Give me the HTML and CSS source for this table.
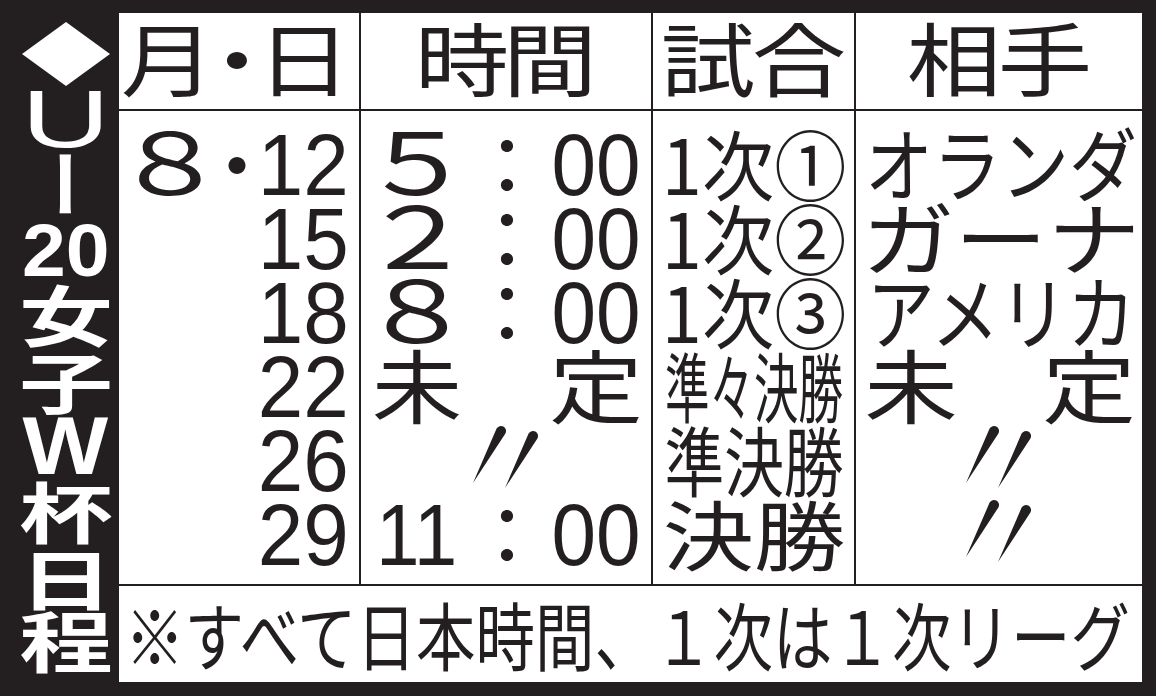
FILE: index.html
```html
<!DOCTYPE html>
<html lang="ja">
<head>
<meta charset="utf-8">
<title>U-20女子W杯日程</title>
<link rel="stylesheet" href="styles.css">
</head>
<body>
<div class="page">
  <div class="side">
    <div class="slot s-dia"><svg width="88" height="64" viewBox="0 0 88 64"><polygon points="44,0 88,32 44,64 0,32" fill="#fff"/></svg></div>
    <div class="slot s-u"><span class="lat">U</span></div>
    <div class="slot s-dash"><span class="dash">ー</span></div>
    <div class="slot s-20"><span class="latb n20">20</span></div>
    <div class="slot s-k1"><span class="kj">女</span></div>
    <div class="slot s-k2"><span class="kj">子</span></div>
    <div class="slot s-w"><span class="latb wl">W</span></div>
    <div class="slot s-k3"><span class="kj">杯</span></div>
    <div class="slot s-k4"><span class="kj">日</span></div>
    <div class="slot s-k5"><span class="kj">程</span></div>
  </div>
  <div class="main">
    <div class="table">
      <div class="cell hd h1"><span class="hc hw64"><span>月</span></span><span class="hc hw74"><span>・</span></span><span class="hc hw59"><span>日</span></span></div>
      <div class="cell hd"><span class="hc hw88"><span>時</span></span><span class="hc hw88"><span>間</span></span></div>
      <div class="cell hd"><span class="hc hw91"><span>試</span></span><span class="hc hw91"><span>合</span></span></div>
      <div class="cell hd"><span class="hc hw91"><span>相</span></span><span class="hc hw91"><span>手</span></span></div>

      <div class="cell body c1">
        <div class="row"><span class="g fw"><span class="fwd">８</span></span><span class="g dot"><span>・</span></span><span class="num">12</span></div>
        <div class="row"><span class="num">15</span></div>
        <div class="row"><span class="num">18</span></div>
        <div class="row"><span class="num">22</span></div>
        <div class="row"><span class="num">26</span></div>
        <div class="row"><span class="num">29</span></div>
      </div>

      <div class="cell body c2">
        <div class="row"><span class="g tl"><span class="fwd">５</span></span><span class="g tc"><span>：</span></span><span class="g tr"><span class="num">00</span></span></div>
        <div class="row"><span class="g tl"><span class="fwd">２</span></span><span class="g tc"><span>：</span></span><span class="g tr"><span class="num">00</span></span></div>
        <div class="row"><span class="g tl"><span class="fwd">８</span></span><span class="g tc"><span>：</span></span><span class="g tr"><span class="num">00</span></span></div>
        <div class="row"><span class="g tl"><span class="kw1">未</span></span><span class="g tc"></span><span class="g tr"><span class="kw2">定</span></span></div>
        <div class="row center"><svg class="ditto" width="76" height="66" viewBox="0 0 76 66"><path d="M37.4 8.4L5 58L28.6 3.6A5 5 0 0 1 37.4 8.4Z"/><path d="M69.4 13.4L37 63L60.6 8.6A5 5 0 0 1 69.4 13.4Z"/></svg></div>
        <div class="row"><span class="g tl"><span class="num n11">11</span></span><span class="g tc"><span>：</span></span><span class="g tr"><span class="num">00</span></span></div>
      </div>

      <div class="cell body c3">
        <div class="row"><span class="g gm sA"><span>1次①</span></span></div>
        <div class="row"><span class="g gm sA"><span>1次②</span></span></div>
        <div class="row"><span class="g gm sA"><span>1次③</span></span></div>
        <div class="row"><span class="g gm sB"><span>準々決勝</span></span></div>
        <div class="row"><span class="g gm sC"><span>準決勝</span></span></div>
        <div class="row"><span class="g gm sD"><span>決勝</span></span></div>
      </div>

      <div class="cell body c4">
        <div class="row"><span class="g gw s4"><span>オランダ</span></span></div>
        <div class="row"><span class="g gw s3"><span>ガーナ</span></span></div>
        <div class="row"><span class="g gw s4"><span>アメリカ</span></span></div>
        <div class="row"><span class="g gk"><span>未</span></span><span class="g gk gk2"><span>定</span></span></div>
        <div class="row center"><svg class="ditto" width="76" height="66" viewBox="0 0 76 66"><path d="M37.4 8.4L5 58L28.6 3.6A5 5 0 0 1 37.4 8.4Z"/><path d="M69.4 13.4L37 63L60.6 8.6A5 5 0 0 1 69.4 13.4Z"/></svg></div>
        <div class="row center"><svg class="ditto" width="76" height="66" viewBox="0 0 76 66"><path d="M37.4 8.4L5 58L28.6 3.6A5 5 0 0 1 37.4 8.4Z"/><path d="M69.4 13.4L37 63L60.6 8.6A5 5 0 0 1 69.4 13.4Z"/></svg></div>
      </div>

      <div class="cell foot"><span>※すべて日本時間、１次は１次リーグ</span></div>
    </div>
  </div>
</div>
</body>
</html>
```

FILE: styles.css
```css
* { box-sizing: border-box; }
html, body { margin: 0; padding: 0; }
body {
  background: #231f20;
  width: 1156px;
  height: 696px;
  overflow: hidden;
  font-family: "Noto Sans CJK JP", sans-serif;
  color: #231f20;
}
.page { display: flex; width: 1156px; height: 696px; }

/* left title column */
.side {
  width: 119px;
  flex: none;
  padding: 20px 0 0 12px;
  display: flex;
  flex-direction: column;
  color: #fff;
}
.slot { display: flex; align-items: center; justify-content: center; flex: none; }
.slot > span { display: block; flex: none; line-height: 1; white-space: nowrap; }
.s-dia { height: 68px; }
.s-u { height: 62px; }
.s-dash { height: 68px; }
.s-20 { height: 64px; }
.s-k1 { height: 66px; }
.s-k2 { height: 68px; }
.s-w { height: 60px; }
.s-k3 { height: 72px; }
.s-k4 { height: 62px; }
.s-k5 { height: 62px; }
.lat { font-family: "Liberation Sans", sans-serif; font-size: 82px; transform: scaleX(1.5); }
.latb { font-family: "Liberation Sans", sans-serif; font-weight: 700; }
.n20 { font-size: 75px; transform: scaleX(1.05); }
.wl { font-size: 81px; transform: scaleX(1.12); }
.dash { font-size: 72px; font-weight: 700; transform: rotate(90deg); margin-left: 8px; }
.kj { font-size: 66px; font-weight: 700; transform: scaleX(1.42); margin-bottom: 7px; }

/* table */
.main { flex: 1; padding: 13px 14px 14px 0; }
.table {
  display: grid;
  grid-template-columns: 240px 290px 201px 286px;
  grid-template-rows: 96px 473px 96px;
  gap: 2px;
  height: 669px;
  background: #231f20;
}
.cell { background: #fff; }

.hd { font-size: 80px; line-height: 84px; white-space: nowrap; text-align: center; }
.h1 { text-align: left; padding-left: 17px; }
.hc { display: inline-flex; justify-content: center; }
.hc > span { display: block; flex: none; transform: scaleX(1.18); }
.hw64 { width: 64px; }
.hw74 { width: 74px; }
.hw59 { width: 59px; }
.hw88 { width: 88px; }
.hw91 { width: 91px; }

.body { padding-top: 12px; }
.row { height: 74px; line-height: 74px; font-size: 80px; white-space: nowrap; }
.g { display: inline-flex; justify-content: center; line-height: 50px; vertical-align: baseline; }
.g > * { display: block; flex: none; transform: scaleX(var(--sx, 1)); }

.num { font-family: "Liberation Sans", sans-serif; font-size: 88px; line-height: 50px; }
.fwd { font-size: 86px; }

.c1 .row { text-align: right; padding-right: 10px; }
.c1 .num { display: inline-block; transform: scaleX(0.93); transform-origin: right; }
.fw { width: 70px; margin-right: 18px; --sx: 1.35; }
.dot { width: 28px; }

.c2 .row { padding-left: 18px; }
.tl { width: 76px; --sx: 1.33; }
.tl .kw1 { --sx: 1.13; }
.tl .n11 { --sx: 0.89; }
.tc { width: 104px; }
.tr { width: 74px; --sx: 0.91; }
.tr .kw2 { --sx: 1.17; }
.ditto { fill: #231f20; vertical-align: baseline; }

.c3 .row { padding-left: 12px; }
.gm { width: 178px; font-size: 76px; }
.sA { --sx: 0.95; }
.sB { --sx: 0.585; }
.sC { --sx: 0.786; }
.sD { --sx: 1.2; }

.c4 .row { padding-left: 12px; }
.gw { width: 266px; }
.s4 { --sx: 0.85; }
.s3 { --sx: 1.16; }
.gk { width: 86px; --sx: 1.17; }
.gk2 { margin-left: 92px; }

.c2 .row.center, .c4 .row.center { text-align: center; padding: 0; }

.foot {
  grid-column: 1 / -1;
  padding-left: 6px;
  font-size: 74px;
  line-height: 93px;
  white-space: nowrap;
}
.foot > span { display: inline-block; transform: scaleX(0.804); transform-origin: left; }
```
